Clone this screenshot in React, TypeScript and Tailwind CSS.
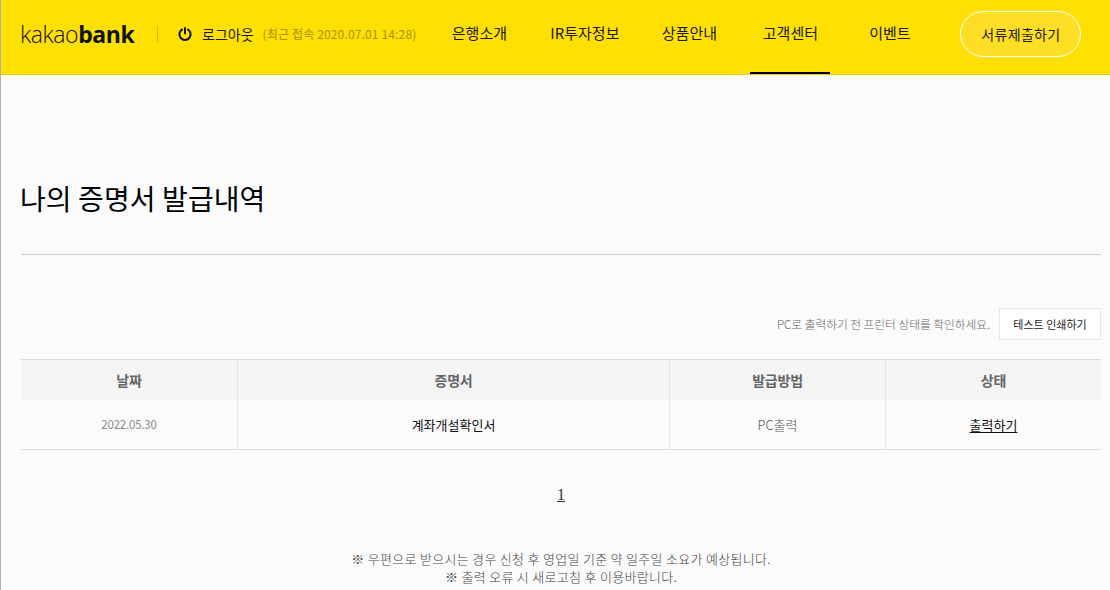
import React from "react";

const KR = { fontFamily: '"Noto Sans CJK KR", "Noto Sans", sans-serif' };

function Header() {
  return (
    <header className="flex h-[75px] items-center border-b border-[#eccf00] bg-[#ffe000] pb-[6px] pl-5">
      <div className="-ml-px flex w-[117px] items-baseline text-[23px] leading-none tracking-[-0.4px] text-[#111] font-['Open_Sans',sans-serif]">
        <span className="font-light">kakao</span>
        <span className="font-bold">bank</span>
      </div>
      <div className="ml-[20px] h-4 w-px bg-[#d0b600]" />
      <svg className="ml-[20px]" width="14" height="14" viewBox="0 0 14 14" fill="none" stroke="#111" strokeWidth="2" strokeLinecap="round">
        <path d="M4 2.6a5.6 5.6 0 1 0 6 0" />
        <path d="M7 1v5.6" />
      </svg>
      <span className="ml-[10px] text-[14px] text-[#1a1a1a]" style={KR}>로그아웃</span>
      <span className="ml-[9px] whitespace-nowrap text-[12px] tracking-[0.15px] text-[#a39200]" style={KR}>(최근 접속 2020.07.01 14:28)</span>
      <nav className="-mb-[6px] ml-[35px] flex h-[74px] items-center text-[15px] text-[#1a1a1a]" style={KR}>
        <span className="w-[56px] whitespace-nowrap pb-[8px] text-center">은행소개</span>
        <span className="ml-[42px] w-[71px] whitespace-nowrap pb-[8px] text-center">IR투자정보</span>
        <span className="ml-[41px] w-[56px] whitespace-nowrap pb-[8px] text-center">상품안내</span>
        <span className="ml-[33px] flex h-full w-[80px] items-center justify-center whitespace-nowrap border-b-2 border-black pb-[6px]">고객센터</span>
        <span className="ml-[38px] w-[43px] whitespace-nowrap pb-[8px] text-center">이벤트</span>
      </nav>
      <button className="ml-[49px] h-[46px] w-[121px] rounded-[23px] border border-white bg-[#ffdf26] text-[14px] tracking-[0.3px] text-[#1a1a1a]" style={KR}>
        서류제출하기
      </button>
    </header>
  );
}

function Table() {
  const head = "flex h-[40px] items-center justify-center text-[14px] font-bold tracking-[-0.2px] text-[#666] bg-[#f4f4f4]";
  const cell = "flex h-[49px] items-center justify-center";
  const line = "border-r border-[#e6e6e6]";
  return (
    <div className="mt-[19px] grid grid-cols-[217px_432px_216px_215px] border-y border-[#dcdcdc]" style={KR}>
      <div className={`${head} ${line}`}>날짜</div>
      <div className={`${head} ${line}`}>증명서</div>
      <div className={`${head} ${line}`}>발급방법</div>
      <div className={head}>상태</div>
      <div className={`${cell} ${line} text-[11.5px] tracking-[-0.2px] text-[#888]`}>2022.05.30</div>
      <div className={`${cell} ${line} text-[13px] font-normal text-[#111]`}>계좌개설확인서</div>
      <div className={`${cell} ${line} text-[13px] font-light text-[#555]`}>PC출력</div>
      <div className={`${cell} text-[13px] font-normal text-[#111]`}><span className="underline underline-offset-2">출력하기</span></div>
    </div>
  );
}

export default function App() {
  return (
    <div className="h-[590px] w-[1110px] overflow-hidden border-l border-[#b0b0b0] bg-[#fbfbfb]">
      <Header />
      <main className="pl-5 pr-[9px]">
        <h1 className="-ml-px mt-[105px] text-[28px] leading-[36px] tracking-[0.1px] text-black" style={KR}>나의 증명서 발급내역</h1>
        <div className="mt-[38px] h-px bg-[#cfcfcf]" />
        <div className="mt-[53px] flex items-center justify-end" style={KR}>
          <span className="text-[11.7px] font-light text-[#666]">PC로 출력하기 전 프린터 상태를 확인하세요.</span>
          <button className="ml-[9px] h-[32px] w-[102px] border border-[#e6e6e6] bg-white text-[11px] font-normal text-[#222]">테스트 인쇄하기</button>
        </div>
        <Table />
        <div className="mt-[33px] text-center text-[16px] leading-[24px] text-[#333] font-['Liberation_Serif',serif]">
          <span className="underline">1</span>
        </div>
        <div className="mt-[43px] text-center text-[13px] leading-[18px] tracking-[0.3px] font-light text-[#444]" style={KR}>
          <p>※ 우편으로 받으시는 경우 신청 후 영업일 기준 약 일주일 소요가 예상됩니다.</p>
          <p>※ 출력 오류 시 새로고침 후 이용바랍니다.</p>
        </div>
      </main>
    </div>
  );
}
